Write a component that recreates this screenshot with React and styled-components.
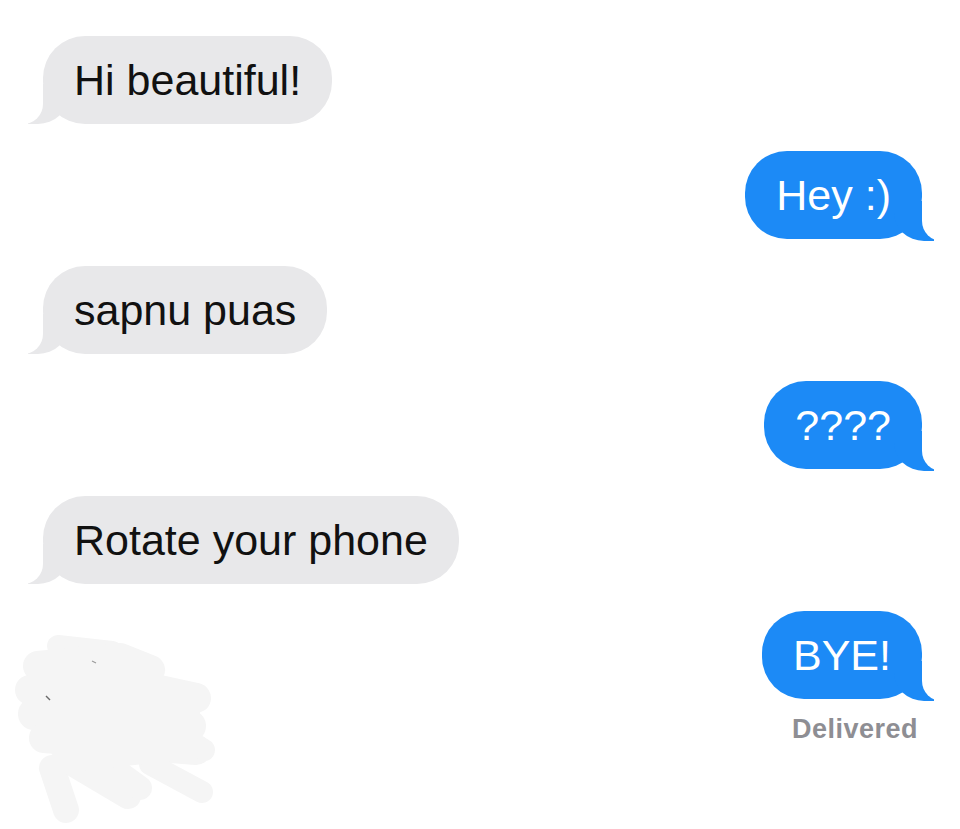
import React from "react";
import styled, { createGlobalStyle, css } from "styled-components";

const Global = createGlobalStyle`
  html, body { margin: 0; padding: 0; background: #ffffff; }
  body { font-family: "Liberation Sans", Arial, sans-serif; }
`;

const Thread = styled.div`
  width: 960px;
  height: 829px;
  box-sizing: border-box;
  padding: 36px 38px 0 43px;
  display: flex;
  flex-direction: column;
  gap: 27px;
  overflow: hidden;
`;

const Row = styled.div`
  display: flex;
  justify-content: ${(p) => (p.$mine ? "flex-end" : "flex-start")};
  align-items: flex-start;
`;

const LastRow = styled.div`
  display: flex;
  justify-content: space-between;
  align-items: flex-start;
`;

const Bubble = styled.div`
  position: relative;
  height: 88px;
  box-sizing: border-box;
  padding: 0 31px;
  display: flex;
  align-items: center;
  border-radius: 42px;
  font-size: 43px;
  white-space: nowrap;
  background: ${(p) => (p.$mine ? "#1c8af6" : "#e8e8ea")};
  color: ${(p) => (p.$mine ? "#ffffff" : "#111111")};

  &::before,
  &::after {
    content: "";
    position: absolute;
    bottom: 0;
    height: 40px;
  }

  ${(p) =>
    p.$mine
      ? css`
          &::before {
            right: -12px;
            bottom: -2px;
            width: 40px;
            background: #1c8af6;
            border-bottom-left-radius: 30px 28px;
          }
          &::after {
            right: -40px;
            bottom: -2px;
            width: 40px;
            background: #ffffff;
            border-bottom-left-radius: 20px;
          }
        `
      : css`
          &::before {
            left: -15px;
            width: 40px;
            background: #e8e8ea;
            border-bottom-right-radius: 30px 28px;
          }
          &::after {
            left: -40px;
            width: 40px;
            background: #ffffff;
            border-bottom-right-radius: 20px;
          }
        `}
`;

const Text = styled.span`
  position: relative;
  z-index: 1;
`;

const SentColumn = styled.div`
  display: flex;
  flex-direction: column;
  align-items: flex-end;
`;

const Status = styled.div`
  margin: 15px 4px 0 0;
  font-size: 27px;
  line-height: 31px;
  font-weight: 700;
  letter-spacing: 0.5px;
  color: #8e8e93;
`;

const ScribbleSvg = styled.svg`
  display: block;
  margin: 24px 0 0 -28px;
`;

function Scribble() {
  const c = "#f5f5f5";
  return (
    <ScribbleSvg width="205" height="190" viewBox="15 637 205 190">
      <g stroke={c} strokeLinecap="round" strokeLinejoin="round" fill="none">
        <path d="M58 648 L112 654" strokeWidth="22" />
        <path d="M38 668 L120 660 L150 672" strokeWidth="30" />
        <path d="M30 692 L150 690 L196 700" strokeWidth="30" />
        <path d="M34 716 L190 728" strokeWidth="32" />
        <path d="M44 740 L196 752" strokeWidth="30" />
        <path d="M52 770 L66 812" strokeWidth="26" />
        <path d="M74 766 L128 798" strokeWidth="26" />
        <path d="M110 768 L140 790" strokeWidth="24" />
        <path d="M150 766 L202 794" strokeWidth="22" />
        <path d="M160 724 L204 752" strokeWidth="22" />
      </g>
      <path d="M40 660 L120 652 L200 700 L200 760 L60 775 L28 700 Z" fill={c} />
      <path d="M92 663 L96 665" stroke="#9a9a9a" strokeWidth="1.2" />
      <path d="M46 698 L50 702" stroke="#6a6a6a" strokeWidth="1.4" />
    </ScribbleSvg>
  );
}

const messages = [
  { mine: false, text: "Hi beautiful!" },
  { mine: true, text: "Hey :)" },
  { mine: false, text: "sapnu puas" },
  { mine: true, text: "????" },
  { mine: false, text: "Rotate your phone" },
];

export default function App() {
  return (
    <>
      <Global />
      <Thread>
        {messages.map((m, i) => (
          <Row key={i} $mine={m.mine}>
            <Bubble $mine={m.mine}>
              <Text>{m.text}</Text>
            </Bubble>
          </Row>
        ))}
        <LastRow>
          <Scribble />
          <SentColumn>
            <Bubble $mine>
              <Text>BYE!</Text>
            </Bubble>
            <Status>Delivered</Status>
          </SentColumn>
        </LastRow>
      </Thread>
    </>
  );
}
